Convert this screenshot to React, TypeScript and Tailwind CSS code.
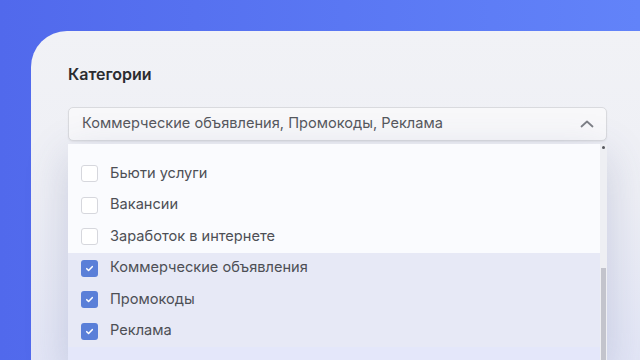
import React from 'react';

const items = [
  { label: 'Бьюти услуги', checked: false },
  { label: 'Вакансии', checked: false },
  { label: 'Заработок в интернете', checked: false },
  { label: 'Коммерческие объявления', checked: true },
  { label: 'Промокоды', checked: true },
  { label: 'Реклама', checked: true },
];

function Checkbox({ checked }: { checked: boolean }) {
  if (checked) {
    return (
      <span className="flex items-center justify-center w-[17px] h-[17px] rounded-[3px] bg-[#5a7fd8] shrink-0">
        <svg width="11" height="11" viewBox="0 0 12 12" fill="none">
          <path d="M3 6.2l2 2 4-4.2" stroke="#fff" strokeWidth="1.7" strokeLinecap="round" strokeLinejoin="round" />
        </svg>
      </span>
    );
  }
  return <span className="w-[17px] h-[17px] rounded-[3px] border border-[#d6d7dd] bg-white shrink-0" />;
}

export default function App() {
  return (
    <div
      className="w-[640px] h-[360px] overflow-hidden bg-gradient-to-r from-[#5169ec] to-[#6283f9] pt-[31px] pl-[31px]"
      style={{ fontFamily: 'Inter, "Noto Sans", sans-serif' }}
    >
      <div className="w-[640px] h-[329px] rounded-tl-[36px] bg-gradient-to-b from-[#f1f2f6] via-[#eeeff5] to-[#e3e6f6] pl-[37px] pt-[33px]">
        <h2 className="text-[16px] leading-[20px] font-semibold text-[#2b2c30]">Категории</h2>

        {/* Select */}
        <div className="mt-[23px] w-[539px] h-[34px] flex items-center justify-between rounded-[5px] border border-[#d9dade] bg-[#f8f8fa] pl-[13px] pr-[12px] shadow-[0_1px_2px_rgba(0,0,0,0.06)]">
          <span className="text-[14.6px] text-[#55575d]">Коммерческие объявления, Промокоды, Реклама</span>
          <svg width="14" height="8" viewBox="0 0 14 8" fill="none">
            <path d="M1.5 6.5L7 1.5l5.5 5" stroke="#7c7e85" strokeWidth="1.8" strokeLinecap="round" strokeLinejoin="round" />
          </svg>
        </div>

        {/* Dropdown */}
        <div className="mt-[3px] w-[539px] h-[220px] flex bg-[#fafbfe] shadow-[0_12px_40px_rgba(70,80,140,0.22)]">
          <div className="flex-1 pt-[14px]">
            {items.map((it) => (
              <div
                key={it.label}
                className={`h-[31.5px] flex items-center gap-[12px] pl-[13px] ${it.checked ? 'bg-[#e7e9f6]' : ''}`}
              >
                <Checkbox checked={it.checked} />
                <span className="text-[14.6px] text-[#4d4f55]">{it.label}</span>
              </div>
            ))}
            <div className="h-[20px] bg-[#e4e7fa]" />
          </div>
          {/* Scrollbar */}
          <div className="w-[7px] bg-[#eeeff3] flex flex-col">
            <div className="h-[3px] mt-[2px] mx-auto w-[3px] rounded-full bg-[#55565c]" />
            <div className="mt-[119px] mx-auto w-[5px] flex-1 bg-[#c3c4cc]" />
          </div>
        </div>
      </div>
    </div>
  );
}
